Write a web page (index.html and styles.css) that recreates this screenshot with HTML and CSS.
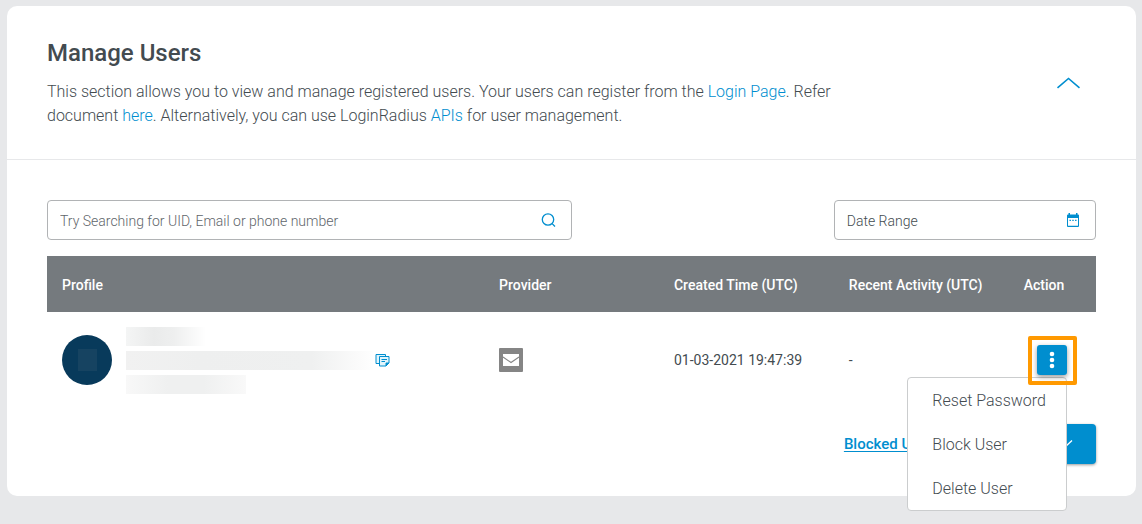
FILE: index.html
```html
<!DOCTYPE html>
<html lang="en">
<head>
<meta charset="utf-8">
<meta name="viewport" content="width=device-width, initial-scale=1">
<title>Manage Users</title>
<link rel="stylesheet" href="styles.css">
</head>
<body>
<main class="card">
  <header class="card-header">
    <div class="intro">
      <h1 class="title">Manage Users</h1>
      <p class="description">This section allows you to view and manage registered users. Your users can register from the <a href="#">Login Page</a>. Refer document <a href="#">here</a>. Alternatively, you can use LoginRadius <a href="#">APIs</a> for user management.</p>
    </div>
    <button class="collapse" type="button" aria-label="Collapse section">
      <svg width="24" height="14" viewBox="0 0 24 14" fill="none" stroke="currentColor" stroke-width="1.6"><path d="M1.500 11.800 12.500 2.500l11 9.300"/></svg>
    </button>
  </header>
  <section class="card-body">
    <div class="filters">
      <div class="field search">
        <input class="field-input" type="text" aria-label="Search users" placeholder="Try Searching for UID, Email or phone number">
        <svg width="16" height="16" viewBox="0 0 16 16" fill="none" stroke="currentColor" stroke-width="1.300"><circle cx="8" cy="7.500" r="5.700"/><path d="m12.100 11.600 2.900 2.900"/></svg>
      </div>
      <div class="field date">
        <input class="field-input" type="text" aria-label="Date range" value="Date Range">
        <svg width="14" height="16" viewBox="0 0 14 16"><path fill="currentColor" d="M2.500 1H4v1.500h6V1h1.500v1.500H12a1 1 0 0 1 1 1V14a1 1 0 0 1-1 1H2a1 1 0 0 1-1-1V3.500a1 1 0 0 1 1-1h.5zM2 6v7.800h10V6z"/><path fill="none" stroke="currentColor" stroke-width="1.200" stroke-dasharray="1.400 1.400" d="M3.500 8.300h7"/></svg>
      </div>
    </div>
    <table class="users">
      <thead>
        <tr>
          <th class="col-profile" scope="col">Profile</th>
          <th class="col-data" scope="col">Provider</th>
          <th class="col-data" scope="col">Created Time (UTC)</th>
          <th class="col-data" scope="col">Recent Activity (UTC)</th>
          <th class="col-action" scope="col">Action</th>
        </tr>
      </thead>
      <tbody>
        <tr>
          <td>
            <div class="profile">
              <span class="avatar"><span class="avatar-mark"></span></span>
              <div class="redacted">
                <span class="blur blur-name"></span>
                <div class="redacted-line">
                  <span class="blur blur-id"></span>
                  <button class="copy" type="button" aria-label="Copy UID">
                    <svg width="16" height="15" viewBox="0 0 16 15" fill="none" stroke="currentColor" stroke-width="1"><path fill="#e2f5fc" d="M4 10.500H1v-9h9.500V3"/><path fill="#e2f5fc" d="M4.500 3.500h9.500v6.500l-3 3H4.500z"/><path d="M11 13v-3h3M6.500 6.500h5.500M6.500 8.500h3.500"/><path fill="currentColor" stroke="none" d="m11 13 3-3h-3z"/></svg>
                  </button>
                </div>
                <span class="blur blur-phone"></span>
              </div>
            </div>
          </td>
          <td>
            <svg class="provider" width="24" height="24" viewBox="0 0 24 24" role="img" aria-label="Email"><rect width="24" height="24" rx="1" fill="#858585"/><path fill="#fff" d="M4 6h16v12H4z"/><path fill="none" stroke="#858585" stroke-width="1.100" d="m4 9 8 5.500L20 9"/></svg>
          </td>
          <td>01-03-2021 19:47:39</td>
          <td>-</td>
          <td class="cell-action">
            <div class="action">
              <button class="kebab" type="button" aria-label="User actions" aria-expanded="true">
                <svg width="6" height="18" viewBox="0 0 6 18" fill="currentColor"><circle cx="3" cy="3" r="2.300"/><circle cx="3" cy="9" r="2.300"/><circle cx="3" cy="15" r="2.300"/></svg>
              </button>
              <div class="menu">
                <button class="menu-item" type="button">Reset Password</button>
                <button class="menu-item" type="button">Block User</button>
                <button class="menu-item" type="button">Delete User</button>
              </div>
              <span class="highlight"></span>
            </div>
          </td>
        </tr>
      </tbody>
    </table>
    <footer class="card-footer">
      <a class="blocked" href="#">Blocked Users</a>
      <button class="more" type="button" aria-label="More options">
        <svg width="16" height="10" viewBox="0 0 16 10" fill="none" stroke="currentColor" stroke-width="1.300"><path d="m1 1.500 7 6.500 7-6.500"/></svg>
      </button>
    </footer>
  </section>
</main>
</body>
</html>
```
FILE: styles.css
```css
* {
  box-sizing: border-box;
}

body {
  margin: 0;
  padding: 6px 6px 28px 7px;
  background: #e7e8ea;
  color: #434b50;
  font-family: Roboto, "Liberation Sans", sans-serif;
  font-size: 15px;
}

button {
  padding: 0;
  border: 0;
  background: none;
  color: #008ecf;
  font: inherit;
  cursor: pointer;
}

a {
  color: #008ecf;
  text-decoration: none;
}

svg {
  display: block;
  flex: none;
}

.card {
  background: #fff;
  border-radius: 10px;
}

.card-header {
  display: flex;
  align-items: center;
  justify-content: space-between;
  padding: 32px 56px 31px 40px;
  border-bottom: 1px solid #e7e8ea;
}

.title {
  margin: 0 0 12px;
  font-size: 24px;
  line-height: 30px;
  font-weight: 500;
}

.description {
  max-width: 790px;
  margin: 0;
  font-size: 16px;
  line-height: 24px;
  font-weight: 300;
}

.card-body {
  padding: 40px 40px 32px;
}

.filters {
  display: flex;
  justify-content: space-between;
  margin-bottom: 16px;
}

.field {
  display: flex;
  align-items: center;
  height: 40px;
  padding: 0 15px 0 12px;
  border: 1px solid #b1b3b5;
  border-radius: 4px;
  color: #008ecf;
}

.search {
  width: 50%;
}

.date {
  width: 25%;
}

.field-input {
  flex: 1;
  min-width: 0;
  padding: 2px 0 0;
  border: 0;
  outline: 0;
  background: none;
  color: #434b50;
  font: inherit;
  font-size: 14px;
  font-weight: 300;
}

.field-input::placeholder {
  color: #5f666b;
  opacity: 1;
}

.users {
  width: 100%;
  table-layout: fixed;
  border-collapse: collapse;
}

.users th {
  height: 56px;
  padding: 2px 0 0 15px;
  background: #757a7e;
  color: #fff;
  font-size: 14px;
  font-weight: 500;
  text-align: left;
  white-space: nowrap;
}

.users td {
  height: 96px;
  padding: 0 0 0 15px;
  font-size: 14px;
}

.col-profile {
  width: 41.67%;
}

.col-data {
  width: 16.67%;
}

.users .cell-action {
  padding: 0;
}

.profile {
  display: flex;
  align-items: center;
  gap: 14px;
}

.avatar {
  display: grid;
  place-items: center;
  width: 50px;
  height: 50px;
  border-radius: 50%;
  background: #083a5b;
}

.avatar-mark {
  width: 19px;
  height: 22px;
  background: #164361;
}

.redacted {
  display: flex;
  flex-direction: column;
  gap: 5px;
}

.redacted-line {
  display: flex;
  align-items: center;
  gap: 2px;
}

.blur {
  display: block;
  height: 19px;
}

.blur-name {
  width: 80px;
  background: linear-gradient(90deg, #f4f5f5, #eaebeb 35%, #eeefef 60%, #fff);
}

.blur-id {
  width: 247px;
  background: linear-gradient(90deg, #f1f1f1, #eeefef 30%, #eff0f0 75%, #fefefe);
}

.blur-phone {
  width: 120px;
  background: linear-gradient(90deg, #f8f8f8, #eff0f0 35%, #eff0f0 65%, #f9f9f9);
}

.action {
  position: relative;
  z-index: 1;
  width: 30px;
  height: 30px;
  margin: 0 auto;
}

.kebab {
  display: grid;
  place-items: center;
  width: 30px;
  height: 30px;
  border-radius: 3px;
  background: #008ecf;
  box-shadow: 0 2px 5px rgba(0, 0, 0, 0.4);
  color: #fff;
}

.highlight {
  position: absolute;
  inset: -9px -10px -10px -9px;
  border: 4px solid #ff9900;
  border-radius: 2px;
  pointer-events: none;
}

.menu {
  position: absolute;
  z-index: -1;
  top: 32px;
  right: 0;
  width: 160px;
  border: 1px solid #cbcdce;
  border-radius: 4px;
  background: #fff;
}

.menu-item {
  display: block;
  width: 100%;
  height: 44px;
  padding: 0 0 0 24px;
  color: #434b50;
  font-size: 16px;
  font-weight: 300;
  text-align: left;
  white-space: nowrap;
}

.card-footer {
  display: flex;
  align-items: center;
  justify-content: flex-end;
  gap: 16px;
  padding-top: 16px;
}

.blocked {
  font-weight: 500;
  text-decoration: underline;
  text-underline-offset: 2px;
}

.more {
  display: flex;
  align-items: center;
  justify-content: flex-end;
  width: 140px;
  height: 40px;
  padding-right: 23px;
  border-radius: 4px;
  background: #008ecf;
  box-shadow: 0 1px 3px rgba(0, 0, 0, 0.4);
  color: #fff;
}
```
